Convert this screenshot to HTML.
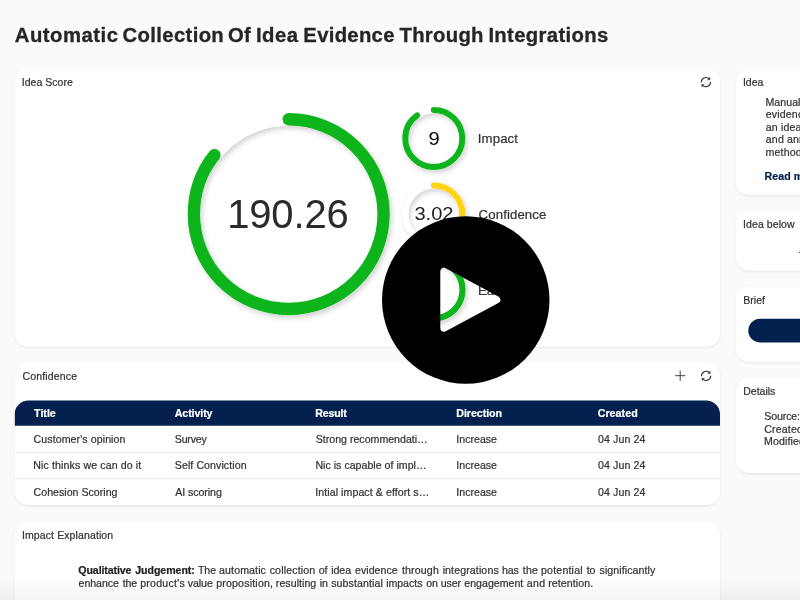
<!DOCTYPE html>
<html lang="en">
<head>
<meta charset="utf-8">
<title>Automatic Collection Of Idea Evidence Through Integrations</title>
<style>
*{box-sizing:border-box;margin:0;padding:0}
html,body{width:800px;height:600px;overflow:hidden;background:#fafafa}
body{font-family:"Liberation Sans",sans-serif;color:#333}
svg{display:block;position:absolute;left:0;top:0;will-change:transform}
text{font-family:"Liberation Sans",sans-serif;white-space:pre;stroke-linejoin:round}
</style>
</head>
<body>
<svg width="800" height="600" viewBox="0 0 800 600">
<defs>
<filter id="cs" x="-5%" y="-10%" width="110%" height="125%"><feDropShadow dx="0" dy="1" stdDeviation="1.3" flood-color="#000" flood-opacity=".09"/></filter>
<filter id="rs" x="-20%" y="-20%" width="140%" height="140%"><feDropShadow dx="2" dy="3" stdDeviation="2.6" flood-color="#000" flood-opacity=".17"/></filter>
<filter id="rs2" x="-40%" y="-40%" width="180%" height="180%"><feDropShadow dx="1.8" dy="2.7" stdDeviation="2.5" flood-color="#000" flood-opacity=".18"/></filter>
<linearGradient id="fd" x1="0" y1="0" x2="0" y2="1"><stop offset="0" stop-color="#000" stop-opacity="0"/><stop offset="1" stop-color="#000" stop-opacity=".045"/></linearGradient>
<clipPath id="tc"><rect x="14.6" y="363" width="705.4" height="142" rx="14"/></clipPath>
<mask id="pm" maskUnits="userSpaceOnUse" x="370" y="205" width="200" height="190"><rect x="370" y="205" width="200" height="190" fill="#fff"/><path d="M444 271.4L444 328L496.6 299.7Z" fill="#000" stroke="#000" stroke-width="7.4" stroke-linejoin="round"/></mask>
</defs>

<rect width="800" height="600" fill="#fafafa"/>
<!-- page title -->
<text y="41.8" fill="#262626" stroke="#262626" stroke-width="0.3" style="font-size:20.3px;font-weight:700"><tspan x="14.75" style="letter-spacing:0.5px">Automatic </tspan><tspan x="122.62" style="letter-spacing:0.347px">Collection </tspan><tspan x="227.88" style="letter-spacing:0.3px">Of </tspan><tspan x="255.88" style="letter-spacing:0.525px">Idea </tspan><tspan x="303.32" style="letter-spacing:0.3px">Evidence </tspan><tspan x="399.5" style="letter-spacing:0.292px">Through </tspan><tspan x="488.38" style="letter-spacing:0.343px">Integrations</tspan></text>
<!-- Idea Score card -->
<rect x="14.6" y="68.8" width="705.4" height="278.0" rx="14" fill="#fff" filter="url(#cs)"/>
<text x="21.8" y="85.6" fill="#333" stroke="#333" stroke-width="0.22" style="font-size:10.5px;letter-spacing:0.028px">Idea Score</text>
<g transform="translate(705.9 82.1)" fill="none" stroke="#333" stroke-width="1.08" stroke-linecap="round"><path d="M-4.6 -0.1A4.6 4.6 0 0 1 3.0 -3.5"/><path d="M4.6 0.1A4.6 4.6 0 0 1 -3.0 3.5"/><path d="M4.1 -4.4V-2.4H2.1Z" fill="#3a3a3a" stroke-width=".5" stroke-linejoin="round"/><path d="M-4.1 4.4V2.4H-2.1Z" fill="#3a3a3a" stroke-width=".5" stroke-linejoin="round"/></g>
<g filter="url(#rs)" fill="none" stroke-linecap="round"><circle cx="288.75" cy="214.1" r="94.85" stroke="#fff" stroke-width="12.4"/><circle cx="288.75" cy="214.1" r="94.85" stroke="#10b41f" stroke-width="12.4" pathLength="360" stroke-dasharray="308.4 360" transform="rotate(-90 288.75 214.1)"/></g>
<text x="227.2" y="228" fill="#2b2b2b" style="font-size:40px;letter-spacing:-0.165px">190.26</text>
<g filter="url(#rs2)" fill="none" stroke-linecap="round"><circle cx="433.8" cy="138.4" r="28.5" stroke="#fff" stroke-width="6"/><circle cx="433.8" cy="138.4" r="28.5" stroke="#10b41f" stroke-width="6" pathLength="360" stroke-dasharray="324 360" transform="rotate(-90 433.8 138.4)"/></g>
<g filter="url(#rs2)" fill="none" stroke-linecap="round"><circle cx="433.8" cy="214.1" r="28.5" stroke="#fff" stroke-width="6"/><circle cx="433.8" cy="214.1" r="28.5" stroke="#ffd419" stroke-width="6" pathLength="360" stroke-dasharray="108.7 360" transform="rotate(-90 433.8 214.1)"/></g>
<g filter="url(#rs2)" fill="none" stroke-linecap="round"><circle cx="433.9" cy="289.8" r="28.6" stroke="#fff" stroke-width="6.2"/><circle cx="433.9" cy="289.8" r="28.6" stroke="#10b41f" stroke-width="6.2" pathLength="360" stroke-dasharray="252 360" transform="rotate(-90 433.9 289.8)"/></g>
<text transform="translate(428.4 145) scale(1.15 1)" fill="#000" style="font-size:17.5px;letter-spacing:0px">9</text>
<text transform="translate(414.4 220.4) scale(1.15 1)" fill="#222" style="font-size:17.5px;letter-spacing:0px">3.02</text>
<text transform="translate(428.6 297) scale(1.15 1)" fill="#222" style="font-size:17.5px;letter-spacing:0px">7</text>
<text x="477.85" y="143" fill="#333" stroke="#333" stroke-width="0.22" style="font-size:13.2px;letter-spacing:0.11px">Impact</text>
<text x="478.62" y="218.75" fill="#333" stroke="#333" stroke-width="0.22" style="font-size:13.2px;letter-spacing:0.111px">Confidence</text>
<text x="478.12" y="295" fill="#333" stroke="#333" stroke-width="0.22" style="font-size:13.2px;letter-spacing:-0.208px">Ease</text>
<!-- Confidence card -->
<rect x="14.6" y="362.8" width="705.4" height="142.2" rx="14" fill="#fff" filter="url(#cs)"/>
<text x="22.4" y="379.8" fill="#333" stroke="#333" stroke-width="0.22" style="font-size:10.5px;letter-spacing:0.164px">Confidence</text>
<path d="M675.1 375.7H685.3M680.2 370.6V380.8" stroke="#3a3a3a" stroke-width=".95" fill="none"/>
<g transform="translate(706.1 375.9)" fill="none" stroke="#333" stroke-width="1.08" stroke-linecap="round"><path d="M-4.6 -0.1A4.6 4.6 0 0 1 3.0 -3.5"/><path d="M4.6 0.1A4.6 4.6 0 0 1 -3.0 3.5"/><path d="M4.1 -4.4V-2.4H2.1Z" fill="#3a3a3a" stroke-width=".5" stroke-linejoin="round"/><path d="M-4.1 4.4V2.4H-2.1Z" fill="#3a3a3a" stroke-width=".5" stroke-linejoin="round"/></g>
<g clip-path="url(#tc)">
<path d="M14.6 425.7V414.4A14 14 0 0 1 28.6 400.4H706A14 14 0 0 1 720 414.4V425.7Z" fill="#03204f"/>
<path d="M14.6 452.5H720M14.6 478.6H720" stroke="#ebebeb" stroke-width="1" fill="none"/>
</g>
<text x="34.08" y="417" fill="#fff" stroke="#fff" stroke-width="0.22" style="font-size:10.7px;font-weight:700;letter-spacing:-0.013px">Title</text>
<text x="174.75" y="417" fill="#fff" stroke="#fff" stroke-width="0.22" style="font-size:10.7px;font-weight:700;letter-spacing:-0.121px">Activity</text>
<text x="315.25" y="417" fill="#fff" stroke="#fff" stroke-width="0.22" style="font-size:10.7px;font-weight:700;letter-spacing:-0.23px">Result</text>
<text x="456.25" y="417" fill="#fff" stroke="#fff" stroke-width="0.22" style="font-size:10.7px;font-weight:700;letter-spacing:-0.059px">Direction</text>
<text x="597.7" y="417" fill="#fff" stroke="#fff" stroke-width="0.22" style="font-size:10.7px;font-weight:700;letter-spacing:0.029px">Created</text>
<text x="33.6" y="443" fill="#333" stroke="#333" stroke-width="0.22" style="font-size:10.6px;letter-spacing:0.087px">Customer's opinion</text>
<text x="174.8" y="443" fill="#333" stroke="#333" stroke-width="0.22" style="font-size:10.6px;letter-spacing:-0.195px">Survey</text>
<text x="315.8" y="443" fill="#333" stroke="#333" stroke-width="0.22" style="font-size:10.6px;letter-spacing:0.0px">Strong recommendati…</text>
<text x="456.3" y="443" fill="#333" stroke="#333" stroke-width="0.22" style="font-size:10.6px;letter-spacing:0.011px">Increase</text>
<text x="598.12" y="443" fill="#333" stroke="#333" stroke-width="0.22" style="font-size:10.6px;letter-spacing:0.091px">04 Jun 24</text>
<text x="33.23" y="469.4" fill="#333" stroke="#333" stroke-width="0.22" style="font-size:10.6px;letter-spacing:0.119px">Nic thinks we can do it</text>
<text x="174.8" y="469.4" fill="#333" stroke="#333" stroke-width="0.22" style="font-size:10.6px;letter-spacing:0.079px">Self Conviction</text>
<text x="315.43" y="469.4" fill="#333" stroke="#333" stroke-width="0.22" style="font-size:10.6px;letter-spacing:0.019px">Nic is capable of impl…</text>
<text x="456.3" y="469.4" fill="#333" stroke="#333" stroke-width="0.22" style="font-size:10.6px;letter-spacing:0.011px">Increase</text>
<text x="598.12" y="469.4" fill="#333" stroke="#333" stroke-width="0.22" style="font-size:10.6px;letter-spacing:0.091px">04 Jun 24</text>
<text x="33.6" y="496" fill="#333" stroke="#333" stroke-width="0.22" style="font-size:10.6px;letter-spacing:0.015px">Cohesion Scoring</text>
<text x="175.3" y="496" fill="#333" stroke="#333" stroke-width="0.22" style="font-size:10.6px;letter-spacing:-0.064px">AI scoring</text>
<text x="315.3" y="496" fill="#333" stroke="#333" stroke-width="0.22" style="font-size:10.6px;letter-spacing:0.072px">Intial impact &amp; effort s…</text>
<text x="456.3" y="496" fill="#333" stroke="#333" stroke-width="0.22" style="font-size:10.6px;letter-spacing:0.011px">Increase</text>
<text x="598.12" y="496" fill="#333" stroke="#333" stroke-width="0.22" style="font-size:10.6px;letter-spacing:0.091px">04 Jun 24</text>
<!-- Impact Explanation card -->
<rect x="14.6" y="522" width="705.4" height="120" rx="14" fill="#fff" filter="url(#cs)"/>
<text x="21.9" y="539.2" fill="#333" stroke="#333" stroke-width="0.22" style="font-size:10.5px;letter-spacing:0.116px">Impact Explanation</text>
<text y="573.8" fill="#222" stroke="#222" stroke-width="0.22" style="font-size:10.6px;font-weight:700"><tspan x="78.33" style="letter-spacing:-0.1px">Qualitative </tspan><tspan x="135.2" style="letter-spacing:-0.044px">Judgement:</tspan></text>
<text y="573.8" fill="#333" stroke="#333" stroke-width="0.22" style="font-size:10.6px"><tspan x="198" style="letter-spacing:-0.1px">The </tspan><tspan x="219.1" style="letter-spacing:0.109px">automatic </tspan><tspan x="269.65" style="letter-spacing:0.161px">collection </tspan><tspan x="318.74" style="letter-spacing:-0.1px">of </tspan><tspan x="331.32" style="letter-spacing:-0.1px">idea </tspan><tspan x="355.1" style="letter-spacing:0.018px">evidence </tspan><tspan x="401.98" style="letter-spacing:0.146px">through </tspan><tspan x="442.65" style="letter-spacing:0.116px">integrations </tspan><tspan x="501.98" style="letter-spacing:-0.1px">has </tspan><tspan x="522.77" style="letter-spacing:0.188px">the </tspan><tspan x="541.05" style="letter-spacing:0.184px">potential </tspan><tspan x="586.7" style="letter-spacing:-0.1px">to </tspan><tspan x="599.52" style="letter-spacing:0.077px">significantly</tspan></text>
<text y="586.8" fill="#333" stroke="#333" stroke-width="0.22" style="font-size:10.6px"><tspan x="78.6" style="letter-spacing:-0.062px">enhance </tspan><tspan x="122.66" style="letter-spacing:-0.1px">the </tspan><tspan x="140.15" style="letter-spacing:0.244px">product's </tspan><tspan x="187.85" style="letter-spacing:-0.1px">value </tspan><tspan x="216.15" style="letter-spacing:0.191px">proposition, </tspan><tspan x="275.85" style="letter-spacing:0.047px">resulting </tspan><tspan x="319.65" style="letter-spacing:-0.05px">in </tspan><tspan x="331.23" style="letter-spacing:0.1px">substantial </tspan><tspan x="386.15" style="letter-spacing:-0.029px">impacts </tspan><tspan x="426.34" style="letter-spacing:-0.1px">on </tspan><tspan x="440.67" style="letter-spacing:-0.1px">user </tspan><tspan x="464.3" style="letter-spacing:0.003px">engagement </tspan><tspan x="526.85" style="letter-spacing:0.25px">and </tspan><tspan x="548.15" style="letter-spacing:0.1px">retention.</tspan></text>
<!-- right column -->
<rect x="735.6" y="68.8" width="120" height="126.2" rx="14" fill="#fff" filter="url(#cs)"/>
<text x="742.9" y="85.8" fill="#333" stroke="#333" stroke-width="0.22" style="font-size:10.5px;letter-spacing:0.042px">Idea</text>
<text x="765.42" y="105.5" fill="#333" stroke="#333" stroke-width="0.22" style="font-size:10.6px;letter-spacing:0.055px">Manual collection of</text>
<text x="765.8" y="118.05" fill="#333" stroke="#333" stroke-width="0.22" style="font-size:10.6px;letter-spacing:0.15px">evidence to support</text>
<text x="765.8" y="130.6" fill="#333" stroke="#333" stroke-width="0.22" style="font-size:10.6px;letter-spacing:0.15px">an idea is slow</text>
<text x="765.8" y="143.15" fill="#333" stroke="#333" stroke-width="0.22" style="font-size:10.6px;letter-spacing:0.15px">and annoying, so a</text>
<text x="765.55" y="155.7" fill="#333" stroke="#333" stroke-width="0.22" style="font-size:10.6px;letter-spacing:0.15px">method is needed</text>
<text x="764.45" y="180" fill="#03204f" stroke="#03204f" stroke-width="0.22" style="font-size:10.6px;font-weight:700;letter-spacing:0.1px">Read more</text>
<rect x="735.6" y="211" width="120" height="59.6" rx="14" fill="#fff" filter="url(#cs)"/>
<text x="743.1" y="227.8" fill="#333" stroke="#333" stroke-width="0.22" style="font-size:10.5px;letter-spacing:0.072px">Idea below</text>
<path d="M799.2 252.5H812" stroke="#03204f" stroke-width="1.2" fill="none"/>
<rect x="735.6" y="287" width="120" height="74.5" rx="14" fill="#fff" filter="url(#cs)"/>
<text x="743.23" y="303.8" fill="#333" stroke="#333" stroke-width="0.22" style="font-size:10.5px;letter-spacing:0.037px">Brief</text>
<rect x="748.3" y="318.8" width="90" height="23.8" rx="11.9" fill="#03204f"/>
<rect x="735.6" y="378" width="120" height="95" rx="14" fill="#fff" filter="url(#cs)"/>
<text x="743.23" y="394.7" fill="#333" stroke="#333" stroke-width="0.22" style="font-size:10.5px;letter-spacing:0.004px">Details</text>
<text x="764.3" y="419.7" fill="#333" stroke="#333" stroke-width="0.22" style="font-size:10.6px;letter-spacing:-0.133px">Source: Manual</text>
<text x="764.3" y="432.5" fill="#333" stroke="#333" stroke-width="0.22" style="font-size:10.6px;letter-spacing:0.15px">Created: 04 Jun 24</text>
<text x="763.92" y="445.3" fill="#333" stroke="#333" stroke-width="0.22" style="font-size:10.6px;letter-spacing:0.15px">Modified: 04 Jun 24</text>
<!-- video play overlay -->
<circle cx="465.75" cy="300" r="83.75" fill="#000" mask="url(#pm)"/>
<rect x="0" y="578" width="800" height="22" fill="url(#fd)"/>
</svg>
</body>
</html>
